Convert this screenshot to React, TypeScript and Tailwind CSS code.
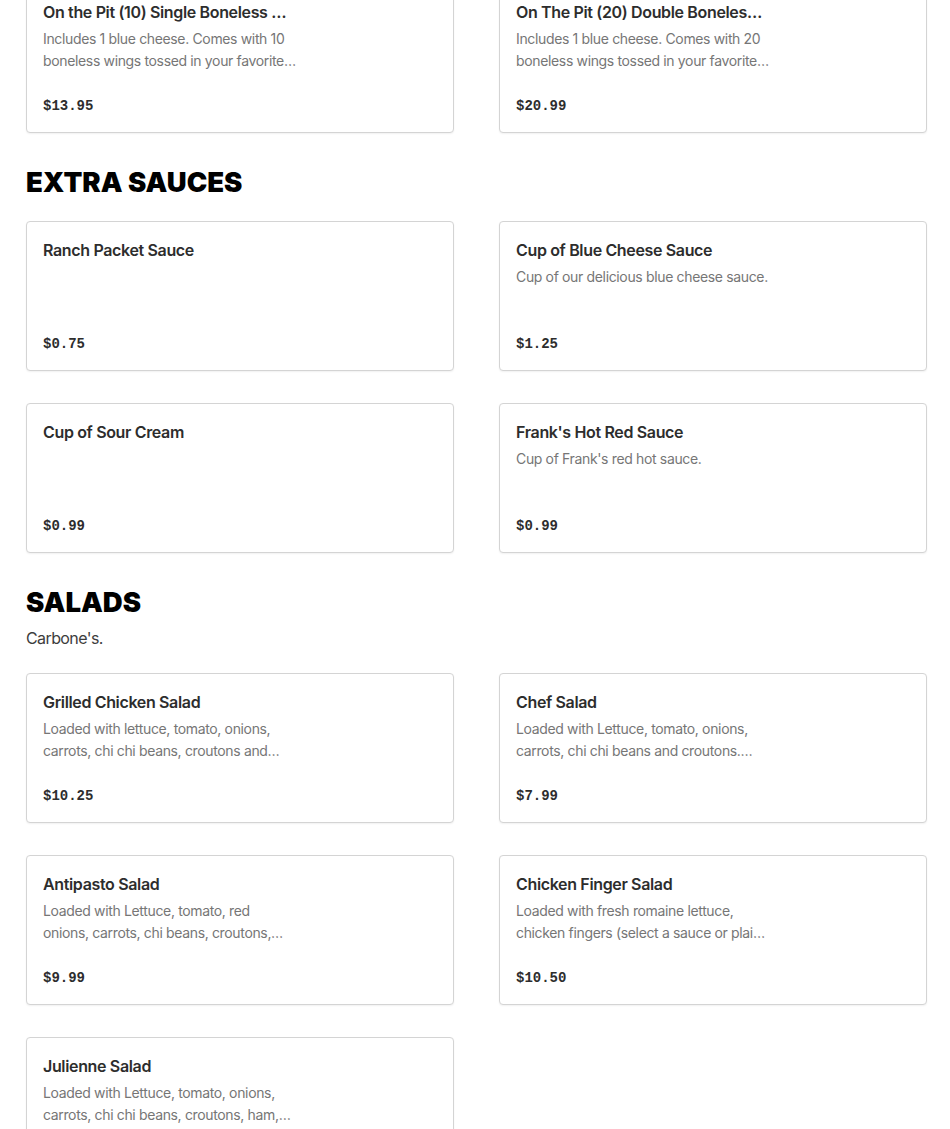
import React from 'react';

type Item = { name: string; desc?: string; price: string };

const wings: Item[] = [
  {
    name: 'On the Pit (10) Single Boneless Wings',
    desc: 'Includes 1 blue cheese. Comes with 10 boneless wings tossed in your favorite sauce.',
    price: '$13.95',
  },
  {
    name: 'On The Pit (20) Double Boneless Wings',
    desc: 'Includes 1 blue cheese. Comes with 20 boneless wings tossed in your favorite sauce.',
    price: '$20.99',
  },
];

const sauces: Item[] = [
  { name: 'Ranch Packet Sauce', price: '$0.75' },
  { name: 'Cup of Blue Cheese Sauce', desc: 'Cup of our delicious blue cheese sauce.', price: '$1.25' },
  { name: 'Cup of Sour Cream', price: '$0.99' },
  { name: "Frank's Hot Red Sauce", desc: "Cup of Frank's red hot sauce.", price: '$0.99' },
];

const salads: Item[] = [
  {
    name: 'Grilled Chicken Salad',
    desc: 'Loaded with lettuce, tomato, onions, carrots, chi chi beans, croutons and grilled chicken.',
    price: '$10.25',
  },
  {
    name: 'Chef Salad',
    desc: 'Loaded with Lettuce, tomato, onions, carrots, chi chi beans and croutons. Topped with ham and cheese.',
    price: '$7.99',
  },
  {
    name: 'Antipasto Salad',
    desc: 'Loaded with Lettuce, tomato, red onions, carrots, chi beans, croutons, salami and cheese.',
    price: '$9.99',
  },
  {
    name: 'Chicken Finger Salad',
    desc: 'Loaded with fresh romaine lettuce, chicken fingers (select a sauce or plain) and cheese.',
    price: '$10.50',
  },
  {
    name: 'Julienne Salad',
    desc: 'Loaded with Lettuce, tomato, onions, carrots, chi chi beans, croutons, ham, turkey and cheese.',
    price: '$9.99',
  },
];

const Card = ({ item }: { item: Item }) => (
  <div className="h-[150px] flex flex-col justify-between border border-[#d4d4d4] rounded-[4px] bg-white p-4 shadow-[0_1px_2px_rgba(0,0,0,0.06)]">
    <div className="w-[254px]">
      <div className="text-[16px] leading-6 font-semibold tracking-[-0.35px] text-[#2d2d2d] truncate">
        {item.name}
      </div>
      {item.desc && (
        <p className="mt-1 text-[14px] leading-[22px] tracking-[-0.35px] text-[#767676] line-clamp-2">
          {item.desc}
        </p>
      )}
    </div>
    <div className="text-[14px] leading-5 font-bold text-[#2d2d2d] font-['Liberation_Mono',monospace]">
      {item.price}
    </div>
  </div>
);

const Grid = ({ items }: { items: Item[] }) => (
  <div className="grid grid-cols-2 gap-x-[45px] gap-y-8">
    {items.map((it) => (
      <Card key={it.name} item={it} />
    ))}
  </div>
);

const App = () => {
  return (
    <div className="bg-white h-[1129px] overflow-hidden pl-[26px] pr-[23px] font-['Inter',sans-serif]">
      <div className="-mt-[17px]">
        <Grid items={wings} />
      </div>

      <h2 className="mt-[31px] text-[27.5px] leading-9 font-black text-black">EXTRA SAUCES</h2>
      <div className="mt-[21px]">
        <Grid items={sauces} />
      </div>

      <h2 className="mt-[31px] text-[27.5px] leading-9 font-black text-black">SALADS</h2>
      <p className="mt-1.5 text-[16px] leading-6 tracking-[-0.6px] text-[#3d3d3d]">Carbone&apos;s.</p>
      <div className="mt-[23px]">
        <Grid items={salads} />
      </div>
    </div>
  );
};

export default App;
